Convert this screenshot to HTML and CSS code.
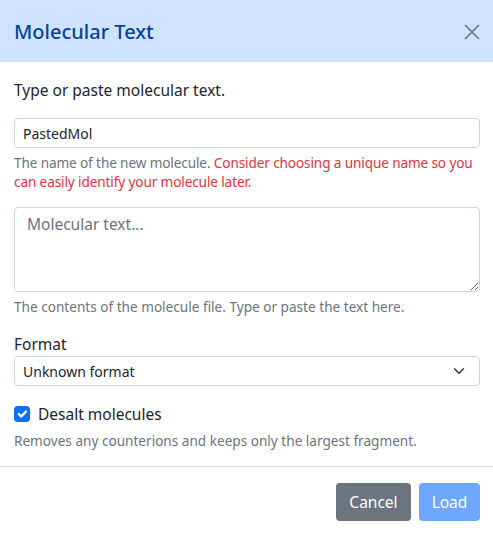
FILE: index.html
```html
<!DOCTYPE html>
<html>
<head>
<meta charset="utf-8">
<link rel="stylesheet" href="styles.css">
</head>
<body>
<div class="modal">
  <div class="modal-header">
    <h5 class="modal-title">Molecular Text</h5>
    <button class="btn-close" aria-label="Close">
      <svg viewBox="0 0 16 16" width="16" height="16"><path d="M1 1L15 15M15 1L1 15" stroke="currentColor" stroke-width="1.6" fill="none"/></svg>
    </button>
  </div>
  <div class="modal-body">
    <p class="intro">Type or paste molecular text.</p>
    <div class="field">
      <input class="form-control sm" type="text" value="PastedMol">
      <div class="form-text tight">The name of the new molecule. <span class="warn">Consider choosing a unique name so you can easily identify your molecule later.</span></div>
    </div>
    <div class="field">
      <textarea class="form-control ta" placeholder="Molecular text..."></textarea>
      <div class="form-text">The contents of the molecule file. Type or paste the text here.</div>
    </div>
    <div class="field">
      <label class="form-label">Format</label>
      <div class="select">
        <span>Unknown format</span>
        <svg viewBox="0 0 16 16" width="16" height="16"><path d="M2 5l6 6 6-6" stroke="#343a40" stroke-width="2" fill="none" stroke-linecap="round" stroke-linejoin="round"/></svg>
      </div>
    </div>
    <div class="field last">
      <div class="check">
        <span class="box"><svg viewBox="0 0 20 20" width="16" height="16"><path d="M6 10l3 3 6-6" stroke="#fff" stroke-width="3" fill="none" stroke-linecap="round" stroke-linejoin="round"/></svg></span>
        <span class="check-label">Desalt molecules</span>
      </div>
      <div class="form-text">Removes any counterions and keeps only the largest fragment.</div>
    </div>
  </div>
  <div class="modal-footer">
    <button class="btn btn-secondary">Cancel</button>
    <button class="btn btn-primary">Load</button>
  </div>
</div>
</body>
</html>
```
FILE: styles.css
```css
* { box-sizing: border-box; }
html, body { margin: 0; padding: 0; background: #fff; }
body { font-family: "Noto Sans", "DejaVu Sans", sans-serif; color: #212529; font-size: 16px; line-height: 1.5; }
.modal { width: 493px; }
.modal-header {
  height: 62px; background: #cfe2ff; display: flex; align-items: center;
  justify-content: space-between; padding: 1px 13px 0 14px;
}
.modal-title { margin: 0; font-size: 20px; font-weight: 500; color: #084298; line-height: 1.2; }
.btn-close { border: 0; background: none; padding: 0; width: 16px; height: 16px; color: #6b7280; display: flex; }
.modal-body { padding: 16px 13px 16px 14px; }
.intro { margin: 0 0 16px; line-height: 24px; font-size: 15.5px; }
.field { margin-bottom: 16px; }
.field.last { margin-bottom: 0; }
.form-control {
  display: block; width: 100%; border: 1px solid #ced4da; border-radius: 4px;
  font-family: inherit; color: #212529; background: #fff; margin: 0;
}
.form-control.sm { height: 30px; font-size: 14px; padding: 0 8px; }
.form-control.ta { height: 85px; font-size: 15.5px; padding: 5px 12px; resize: vertical; line-height: 1.5; }
.form-control.ta::placeholder { color: #6c757d; }
.form-text { font-size: 13.6px; color: #6c757d; margin-top: 5px; line-height: 19px; }
.form-text.tight { letter-spacing: -0.12px; margin-right: -4px; }
.warn { color: #dc3545; }
.form-label { display: block; font-size: 15.5px; line-height: 24px; margin-bottom: 0; }
.select {
  height: 30px; border: 1px solid #ced4da; border-radius: 4px; display: flex; align-items: center;
  justify-content: space-between; padding: 0 14px 0 8px; font-size: 14px;
}
.select svg { width: 12px; height: 12px; }
.check { display: flex; align-items: center; gap: 8px; height: 24px; }
.box { width: 16px; height: 16px; border-radius: 4px; background: #0d6efd; display: flex; align-items: center; justify-content: center; }
.check-label { font-size: 15.5px; line-height: 24px; }
.modal-footer {
  border-top: 1px solid #dee2e6; display: flex; justify-content: flex-end; gap: 8px;
  padding: 16px 13px 12px 14px;
}
.btn { font-family: inherit; font-size: 15.5px; border: 0; border-radius: 4px; height: 38px; padding: 0 12px; color: #fff; }
.btn-secondary { background: #6c757d; width: 75px; }
.btn-primary { background: #6ea8fe; width: 61px; }
```
